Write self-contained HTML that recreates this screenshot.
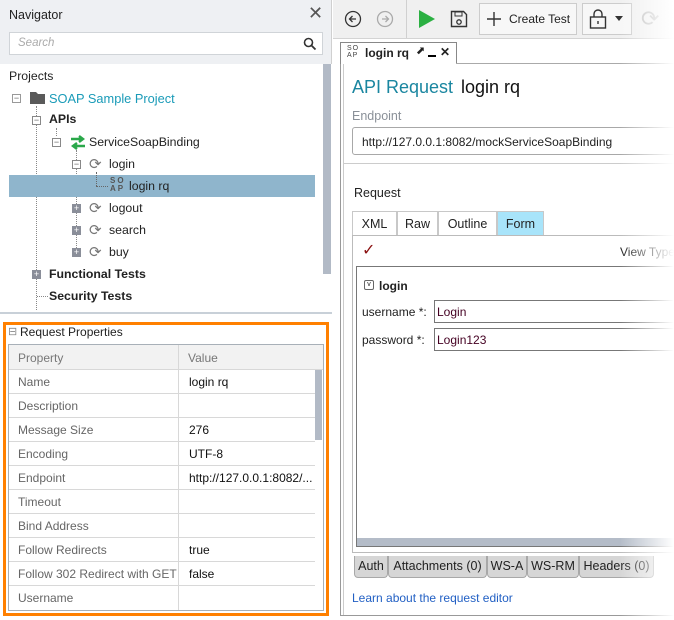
<!DOCTYPE html>
<html><head><meta charset="utf-8"><style>
*{box-sizing:border-box;margin:0;padding:0}
body{width:674px;height:620px;overflow:hidden;background:#fff;font-family:"Liberation Sans",sans-serif;font-size:12.5px;color:#222;position:relative}
.a{position:absolute;white-space:nowrap}
.row{position:absolute;left:9px;width:306px;height:24px;border-bottom:1px solid #d8d8d8;color:#666;font-size:12px}
.row span{position:absolute;top:5px}
.row .v{left:180px;color:#111}
.row .p{left:9px}
.tab{position:absolute;top:211px;height:25px;border:1px solid #c8c8c8;border-bottom:none;background:#fff;text-align:center;line-height:24px}
.bt{position:absolute;top:556px;height:22px;background:#d6d6d6;border:1px solid #a8a8a8;border-top:none;border-radius:0 0 4px 4px;line-height:21px;text-align:center;font-size:12.5px}
.pm{position:absolute;width:9px;height:9px;border:1px solid #888;background:#fff;font-size:9px;line-height:7px;text-align:center;color:#666}
.pf{background:#8a8e99;border-color:#8a8e99;color:#fff}
.t{font-size:12.3px}
</style></head><body>
<div class="a" style="left:0;top:0;width:332px;height:64px;background:#eef0f3;border-right:1px solid #d0d0d0"></div>
<div class="a" style="left:9px;top:8px;font-size:12.5px">Navigator</div>
<div class="a" style="left:308px;top:3px;font-size:18px;color:#555">✕</div>
<div class="a" style="left:9px;top:32px;width:314px;height:23px;background:#fff;border:1px solid #d0d4d8"></div>
<div class="a" style="left:18px;top:37px;font-size:11.5px;color:#aaa;font-style:italic">Search</div>
<svg class="a" style="left:303px;top:37px" width="14" height="14"><circle cx="5.5" cy="5.5" r="4" fill="none" stroke="#333" stroke-width="1.6"/><path d="M8.5 8.5L12.5 12.5" stroke="#333" stroke-width="1.8"/></svg>
<div class="a" style="left:1px;top:64px;width:322px;height:248px;background:#fff"></div>
<div class="a" style="left:323px;top:64px;width:8px;height:210px;background:#b2bac6"></div>
<div class="a" style="left:0;top:312px;width:332px;height:2px;background:#c8d0d8"></div>
<div class="a t" style="left:9px;top:69px">Projects</div>
<div class="pm" style="left:12px;top:94px;border-color:#999">−</div>
<svg class="a" style="left:30px;top:91px" width="15" height="13"><path d="M0 1h6l2 2h7v10H0z" fill="#5a5a5a"/></svg>
<div class="a" style="left:49px;top:91px;color:#1a9bb8;font-size:12.8px">SOAP Sample Project</div>
<div class="a" style="left:36px;top:106px;height:204px;border-left:1px dotted #888"></div>
<div class="pm" style="left:32px;top:116px">−</div>
<div class="a t" style="left:49px;top:112px;font-weight:bold;color:#222">APIs</div>
<div class="a" style="left:56px;top:128px;height:8px;border-left:1px dotted #888"></div>
<div class="pm" style="left:52px;top:138px">−</div>
<svg class="a" style="left:70px;top:135px" width="16" height="15"><path d="M1 4h11M9 1l4 3-4 3M15 11H4M7 8l-4 3 4 3" stroke="#2aa84a" stroke-width="2.4" fill="none"/></svg>
<div class="a t" style="left:89px;top:135px">ServiceSoapBinding</div>
<div class="a" style="left:76px;top:150px;height:104px;border-left:1px dotted #888"></div>
<div class="pm" style="left:72px;top:160px">−</div>
<div class="a" style="left:89px;top:155px;color:#777;font-size:15px">⟳</div>
<div class="a t" style="left:109px;top:157px">login</div>
<div class="a" style="left:9px;top:175px;width:306px;height:22px;background:#8fb5cc"></div>
<div class="a" style="left:96px;top:172px;height:14px;border-left:1px dotted #666"></div>
<div class="a" style="left:96px;top:186px;width:12px;border-top:1px dotted #666"></div>
<div class="a" style="left:110px;top:177px;font-size:8px;line-height:8px;color:#555;font-weight:bold;letter-spacing:2px">SO<br>AP</div>
<div class="a t" style="left:129px;top:179px">login rq</div>
<div class="pm pf" style="left:72px;top:204px">+</div>
<div class="a" style="left:89px;top:199px;color:#777;font-size:15px">⟳</div>
<div class="a t" style="left:109px;top:201px">logout</div>
<div class="pm pf" style="left:72px;top:226px">+</div>
<div class="a" style="left:89px;top:221px;color:#777;font-size:15px">⟳</div>
<div class="a t" style="left:109px;top:223px">search</div>
<div class="pm pf" style="left:72px;top:248px">+</div>
<div class="a" style="left:89px;top:243px;color:#777;font-size:15px">⟳</div>
<div class="a t" style="left:109px;top:245px">buy</div>
<div class="pm pf" style="left:32px;top:270px">+</div>
<div class="a t" style="left:49px;top:267px;font-weight:bold">Functional Tests</div>
<div class="a" style="left:37px;top:296px;width:11px;border-top:1px dotted #888"></div>
<div class="a t" style="left:49px;top:289px;font-weight:bold">Security Tests</div>
<div class="a" style="left:3px;top:322px;width:326px;height:294px;border:3px solid #ff8000"></div>
<div class="a" style="left:8px;top:325px;font-size:11px;color:#888">⊟</div>
<div class="a" style="left:20px;top:325px;font-size:12px">Request Properties</div>
<div class="a" style="left:8px;top:344px;width:316px;height:267px;border:1px solid #a8b0b8"></div>
<div class="a" style="left:9px;top:345px;width:314px;height:25px;background:#f2f2f2;border-bottom:1px solid #d8d8d8"></div>
<div class="a" style="left:18px;top:351px;color:#777;font-size:12px">Property</div>
<div class="a" style="left:188px;top:351px;color:#777;font-size:12px">Value</div>
<div class="a" style="left:178px;top:345px;height:265px;border-left:1px solid #d8d8d8"></div>
<div class="a" style="left:315px;top:370px;width:7px;height:70px;background:#b2bac6"></div>
<div class="row" style="top:370px"><span class="p">Name</span><span class="v">login rq</span></div>
<div class="row" style="top:394px"><span class="p">Description</span></div>
<div class="row" style="top:418px"><span class="p">Message Size</span><span class="v">276</span></div>
<div class="row" style="top:442px"><span class="p">Encoding</span><span class="v">UTF-8</span></div>
<div class="row" style="top:466px"><span class="p">Endpoint</span><span class="v">http://127.0.0.1:8082/...</span></div>
<div class="row" style="top:490px"><span class="p">Timeout</span></div>
<div class="row" style="top:514px"><span class="p">Bind Address</span></div>
<div class="row" style="top:538px"><span class="p">Follow Redirects</span><span class="v">true</span></div>
<div class="row" style="top:562px"><span class="p">Follow 302 Redirect with GET</span><span class="v">false</span></div>
<div class="row" style="top:586px;border:none"><span class="p">Username</span></div>
<div class="a" style="left:333px;top:0;width:341px;height:39px;background:#f0f0f0;border-bottom:1px solid #d4d4d4"></div>
<div class="a" style="left:406px;top:0;height:38px;border-left:1px solid #d0d0d0"></div>
<svg class="a" style="left:344px;top:10px" width="18" height="18"><circle cx="9" cy="9" r="7.5" fill="none" stroke="#333" stroke-width="1.3"/><path d="M12 9H6M8.5 6L5.5 9l3 3" stroke="#333" stroke-width="1.3" fill="none"/></svg>
<svg class="a" style="left:376px;top:10px" width="18" height="18"><circle cx="9" cy="9" r="7.5" fill="none" stroke="#aaa" stroke-width="1.3"/><path d="M6 9h6M9.5 6l3 3-3 3" stroke="#aaa" stroke-width="1.3" fill="none"/></svg>
<svg class="a" style="left:418px;top:9px" width="18" height="20"><path d="M1 1L17 10 1 19z" fill="#2bb042"/></svg>
<svg class="a" style="left:450px;top:10px" width="18" height="18"><path d="M1.5 1.5h12l3 3v12h-15z" fill="none" stroke="#333" stroke-width="1.4"/><rect x="5" y="2" width="7" height="4" fill="none" stroke="#333"/><circle cx="9" cy="12" r="2.2" fill="none" stroke="#333" stroke-width="1.3"/></svg>
<div class="a" style="left:479px;top:3px;width:98px;height:32px;border:1px solid #ccc;background:#f7f7f7"></div>
<svg class="a" style="left:487px;top:12px" width="14" height="14"><path d="M7 0v14M0 7h14" stroke="#333" stroke-width="1.4"/></svg>
<div class="a" style="left:509px;top:12px;font-size:12px">Create Test</div>
<div class="a" style="left:582px;top:3px;width:50px;height:32px;border:1px solid #ccc;background:#f7f7f7"></div>
<svg class="a" style="left:589px;top:8px" width="18" height="22"><path d="M5 9V6a4 4 0 0 1 8 0v3" fill="none" stroke="#333" stroke-width="1.4"/><rect x="1.5" y="9" width="15" height="11" fill="none" stroke="#333" stroke-width="1.4"/><path d="M9 13v3" stroke="#333" stroke-width="1.4"/></svg>
<svg class="a" style="left:615px;top:16px" width="8" height="5"><path d="M0 0h8L4 5z" fill="#333"/></svg>
<div class="a" style="left:641px;top:6px;font-size:22px;color:#bbb">⟳</div>
<div class="a" style="left:340px;top:42px;width:117px;height:22px;border:1px solid #888;border-bottom:none;background:#fff"></div>
<div class="a" style="left:347px;top:45px;font-size:7px;line-height:7px;color:#444;letter-spacing:1px">SO<br>AP</div>
<div class="a" style="left:365px;top:46px;font-weight:bold;font-size:12px">login rq</div>
<div class="a" style="left:416px;top:44px;font-size:11px">⬈</div>
<div class="a" style="left:428px;top:55px;width:8px;height:2px;background:#000"></div>
<div class="a" style="left:440px;top:45px;font-size:12px;font-weight:bold">✕</div>
<div class="a" style="left:456px;top:63px;width:218px;border-top:1px solid #aaa"></div>
<div class="a" style="left:340px;top:64px;height:552px;border-left:1px solid #999"></div>
<div class="a" style="left:343px;top:64px;height:552px;border-left:1px solid #ccc"></div>
<div class="a" style="left:340px;top:615px;width:334px;border-top:1px solid #999"></div>
<div class="a" style="left:352px;top:77px;font-size:18px;color:#1a86a0">API Request</div>
<div class="a" style="left:461px;top:77px;font-size:18px;color:#111">login rq</div>
<div class="a" style="left:352px;top:109px;color:#8a9098">Endpoint</div>
<div class="a" style="left:352px;top:127px;width:330px;height:28px;border:1px solid #a8a8a8;border-radius:3px"></div>
<div class="a" style="left:362px;top:135px;font-size:12px">http://127.0.0.1:8082/mockServiceSoapBinding</div>
<div class="a" style="left:344px;top:163px;width:330px;border-top:1px solid #ccc"></div>
<div class="a" style="left:354px;top:186px">Request</div>
<div class="tab" style="left:352px;width:45px">XML</div>
<div class="tab" style="left:397px;width:41px">Raw</div>
<div class="tab" style="left:438px;width:59px">Outline</div>
<div class="tab" style="left:497px;width:47px;background:#a8e4fa">Form</div>
<div class="a" style="left:352px;top:235px;width:330px;height:318px;border:1px solid #bbb;border-right:none"></div>
<div class="a" style="left:362px;top:240px;color:#8a1010;font-size:16px">✓</div>
<div class="a" style="left:620px;top:245px;font-size:12px">View Type</div>
<div class="a" style="left:356px;top:266px;width:320px;height:281px;border:1px solid #777;border-right:none"></div>
<div class="a" style="left:357px;top:538px;width:318px;height:8px;background:#b4bcc8"></div>
<div class="a" style="left:364px;top:280px;width:10px;height:10px;border:1px solid #666;border-radius:2px;font-size:7px;line-height:8px;text-align:center">v</div>
<div class="a" style="left:379px;top:279px;font-weight:bold;font-size:12px">login</div>
<div class="a" style="left:362px;top:305px;font-size:12px">username *:</div>
<div class="a" style="left:434px;top:300px;width:245px;height:23px;border:1px solid #777"></div>
<div class="a" style="left:437px;top:305px;font-size:12px;color:#402">Login</div>
<div class="a" style="left:362px;top:333px;font-size:12px">password *:</div>
<div class="a" style="left:434px;top:328px;width:245px;height:23px;border:1px solid #777"></div>
<div class="a" style="left:437px;top:333px;font-size:12px;color:#402">Login123</div>
<div class="bt" style="left:354px;width:34px">Auth</div>
<div class="bt" style="left:388px;width:99px">Attachments (0)</div>
<div class="bt" style="left:487px;width:40px">WS-A</div>
<div class="bt" style="left:527px;width:52px">WS-RM</div>
<div class="bt" style="left:579px;width:75px">Headers (0)</div>
<div class="a" style="left:352px;top:591px;color:#2260c4;font-size:12px">Learn about the request editor</div>
<div class="a" style="left:620px;top:0;width:54px;height:620px;background:linear-gradient(to right,rgba(255,255,255,0),#fff)"></div>
</body></html>
